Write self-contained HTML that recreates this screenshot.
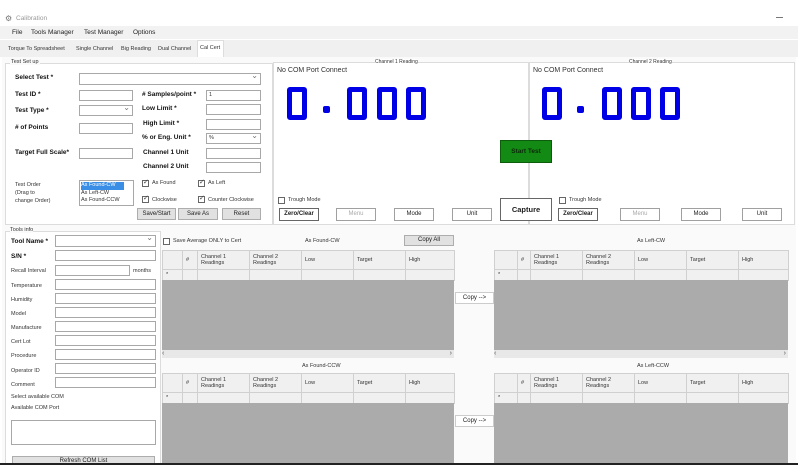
<!DOCTYPE html>
<html><head><meta charset="utf-8"><style>
*{box-sizing:border-box;margin:0;padding:0}
body{width:798px;height:472px;overflow:hidden;background:#fff;font-family:"Liberation Sans",sans-serif;font-size:6px;color:#333;position:relative}
.a{position:absolute;white-space:nowrap}
.b{font-weight:bold;font-size:6.5px;color:#111}
.in{position:absolute;background:#fff;border:1px solid #a8a8a8}
.dd:after{content:"⌄";position:absolute;right:2px;top:-3px;font-size:8px;color:#777}
.btn{position:absolute;border:1px solid #adadad;background:#e1e1e1;text-align:center;font-size:6px;color:#222}
.wb{background:#fff;border:1px solid #a0a0a0}
.cb{position:absolute;width:7px;height:7px;border:1px solid #666;background:#fff}
.ck:after{content:"✓";position:absolute;left:0;top:-3px;font-size:7px;color:#444}
.grp{position:absolute;border:1px solid #dcdcdc}
.dg{width:10px;height:33px;border:5px solid #0000e6;border-radius:3px;position:absolute}
.dot{position:absolute;width:7px;height:7px;background:#0000e6;border-radius:2px}
table{position:absolute;border-collapse:collapse;table-layout:fixed}
td{border:1px solid #d0d0d0;background:#f0f0f0;font-size:5.5px;color:#333;padding-left:3px;line-height:6px;vertical-align:middle}
.gray{position:absolute;background:#ababab}
.sb{position:absolute;background:#e8e8e8;height:8px;font-size:7px;color:#555}
</style></head><body>
<div class="a" style="left:5px;top:14px;font-size:8px;color:#777">&#x2699;</div>
<div class="a" style="left:16px;top:15px;font-size:6.5px;color:#999">Calibration</div>
<div class="a" style="left:776px;top:17px;width:7px;height:1px;background:#777"></div>
<div class="a" style="left:0;top:26px;width:798px;height:13px;background:#f2f2f2"></div>
<div class="a" style="left:12px;top:29px;font-size:6.5px;color:#222">File</div>
<div class="a" style="left:31px;top:29px;font-size:6.5px;color:#222">Tools Manager</div>
<div class="a" style="left:84px;top:29px;font-size:6.5px;color:#222">Test Manager</div>
<div class="a" style="left:133px;top:29px;font-size:6.5px;color:#222">Options</div>
<div class="a" style="left:0;top:40px;width:798px;height:17px;background:#f0f0f0"></div>
<div class="a" style="left:8px;top:46px;font-size:5.5px">Torque To Spreadsheet</div>
<div class="a" style="left:76px;top:46px;font-size:5.5px">Single Channel</div>
<div class="a" style="left:121px;top:46px;font-size:5.5px">Big Reading</div>
<div class="a" style="left:158px;top:46px;font-size:5.5px">Dual Channel</div>
<div class="a" style="left:197px;top:40px;width:27px;height:17px;background:#fff;border:1px solid #ddd;border-bottom:none"></div>
<div class="a" style="left:200px;top:45px;font-size:5.5px">Cal Cert</div>
<div class="a" style="left:2px;top:57px;width:794px;height:408px;background:#fafafa"></div>

<div class="grp" style="left:5px;top:63px;width:268px;height:162px;background:#fff"></div>
<div class="a" style="left:10px;top:59px;font-size:5.5px;background:#fafafa;padding:0 1px">Test Set up</div>
<div class="a b" style="left:15px;top:74px">Select Test *</div>
<div class="in dd" style="left:79px;top:73px;width:182px;height:12px"></div>
<div class="a b" style="left:15px;top:91px">Test ID *</div>
<div class="in" style="left:79px;top:90px;width:54px;height:11px"></div>
<div class="a b" style="left:142px;top:91px"># Samples/point *</div>
<div class="in" style="left:206px;top:90px;width:55px;height:11px"><span style="position:absolute;left:2px;top:1px;font-size:5.5px">1</span></div>
<div class="a b" style="left:15px;top:107px">Test Type *</div>
<div class="in dd" style="left:79px;top:105px;width:54px;height:11px"></div>
<div class="a b" style="left:142px;top:105px">Low Limit *</div>
<div class="in" style="left:206px;top:104px;width:55px;height:11px"></div>
<div class="a b" style="left:15px;top:124px"># of Points</div>
<div class="in" style="left:79px;top:123px;width:54px;height:11px"></div>
<div class="a b" style="left:143px;top:120px">High Limit *</div>
<div class="in" style="left:206px;top:119px;width:55px;height:11px"></div>
<div class="a b" style="left:142px;top:134px">% or Eng. Unit *</div>
<div class="in dd" style="left:206px;top:133px;width:55px;height:11px"><span style="position:absolute;left:2px;top:1px;font-size:5.5px">%</span></div>
<div class="a b" style="left:15px;top:149px">Target Full Scale*</div>
<div class="in" style="left:79px;top:148px;width:54px;height:11px"></div>
<div class="a b" style="left:143px;top:149px">Channel 1 Unit</div>
<div class="in" style="left:206px;top:148px;width:55px;height:11px"></div>
<div class="a b" style="left:143px;top:163px">Channel 2 Unit</div>
<div class="in" style="left:206px;top:162px;width:55px;height:11px"></div>
<div class="a" style="left:15px;top:181px;line-height:8px;font-size:5.5px">Test Order<br>(Drag to<br>change Order)</div>
<div class="in" style="left:79px;top:180px;width:55px;height:26px;font-size:5.5px;line-height:7.5px;padding-left:1px">
<div style="background:#3a8ee6;color:#fff;width:43px;margin-top:1px">As Found-CW</div>As Left-CW<br>As Found-CCW</div>
<div class="cb ck" style="left:142px;top:180px"></div><div class="a" style="left:152px;top:180px;font-size:5.5px">As Found</div>
<div class="cb ck" style="left:198px;top:180px"></div><div class="a" style="left:208px;top:180px;font-size:5.5px">As Left</div>
<div class="cb ck" style="left:142px;top:196px"></div><div class="a" style="left:152px;top:197px;font-size:5.5px">Clockwise</div>
<div class="cb ck" style="left:198px;top:196px"></div><div class="a" style="left:208px;top:197px;font-size:5.5px">Counter Clockwise</div>
<div class="btn" style="left:137px;top:208px;width:39px;height:12px;line-height:10px">Save/Start</div>
<div class="btn" style="left:178px;top:208px;width:40px;height:12px;line-height:10px">Save As</div>
<div class="btn" style="left:222px;top:208px;width:39px;height:12px;line-height:10px">Reset</div>

<div class="grp" style="left:273px;top:62px;width:256px;height:163px;background:#fff"></div>
<div class="grp" style="left:529px;top:62px;width:266px;height:163px;background:#fff"></div>
<div class="a" style="left:375px;top:59px;font-size:5px;background:#fff">Channel 1 Reading</div>
<div class="a" style="left:629px;top:59px;font-size:5px;background:#fff">Channel 2 Reading</div>
<div class="a" style="left:277px;top:67px;font-size:7px;color:#333">No COM Port Connect</div>
<div class="a" style="left:533px;top:67px;font-size:7px;color:#333">No COM Port Connect</div>
<div class="dg" style="left:287px;top:87px;width:20px"></div>
<div class="dot" style="left:323px;top:106px"></div>
<div class="dg" style="left:347px;top:87px;width:20px"></div>
<div class="dg" style="left:377px;top:87px;width:20px"></div>
<div class="dg" style="left:406px;top:87px;width:20px"></div>
<div class="dg" style="left:542px;top:87px;width:20px"></div>
<div class="dot" style="left:577px;top:106px"></div>
<div class="dg" style="left:602px;top:87px;width:20px"></div>
<div class="dg" style="left:631px;top:87px;width:20px"></div>
<div class="dg" style="left:660px;top:87px;width:20px"></div>
<div class="a" style="left:500px;top:140px;width:52px;height:23px;background:#138a13;border:1px solid #0c5c0c;text-align:center;line-height:21px;font-size:6.5px;font-weight:bold;color:#062"><span style="color:#0a2a0a">Start Test</span></div>
<div class="cb" style="left:278px;top:197px"></div><div class="a" style="left:288px;top:197px;font-size:5.5px">Trough Mode</div>
<div class="cb" style="left:559px;top:197px"></div><div class="a" style="left:569px;top:197px;font-size:5.5px">Trough Mode</div>
<div class="btn wb" style="left:279px;top:208px;width:40px;height:13px;line-height:11px;font-weight:bold;border-color:#666">Zero/Clear</div>
<div class="btn wb" style="left:336px;top:208px;width:40px;height:13px;line-height:11px;color:#aaa">Menu</div>
<div class="btn wb" style="left:394px;top:208px;width:40px;height:13px;line-height:11px">Mode</div>
<div class="btn wb" style="left:452px;top:208px;width:40px;height:13px;line-height:11px">Unit</div>
<div class="btn wb" style="left:500px;top:198px;width:52px;height:23px;line-height:21px;font-weight:bold;font-size:7.5px;border:1px solid #666">Capture</div>
<div class="btn wb" style="left:558px;top:208px;width:40px;height:13px;line-height:11px;font-weight:bold;border-color:#666">Zero/Clear</div>
<div class="btn wb" style="left:620px;top:208px;width:40px;height:13px;line-height:11px;color:#aaa">Menu</div>
<div class="btn wb" style="left:681px;top:208px;width:40px;height:13px;line-height:11px">Mode</div>
<div class="btn wb" style="left:742px;top:208px;width:40px;height:13px;line-height:11px">Unit</div>

<div class="grp" style="left:5px;top:231px;width:156px;height:234px;background:#fff"></div>
<div class="a" style="left:10px;top:227px;font-size:5.5px;background:#fafafa">Tools info</div>
<div class="a b" style="left:11px;top:238px">Tool Name *</div>
<div class="in dd" style="left:55px;top:235px;width:101px;height:12px"></div>
<div class="a b" style="left:11px;top:253px">S/N *</div>
<div class="in" style="left:55px;top:250px;width:101px;height:11px"></div>
<div class="a" style="left:11px;top:268px;font-size:5.5px">Recall Interval</div>
<div class="in" style="left:55px;top:265px;width:75px;height:11px"></div>
<div class="a" style="left:133px;top:268px;font-size:5.5px">months</div>
<div class="a" style="left:11px;top:283px;font-size:5.5px">Temperature</div><div class="in" style="left:55px;top:279px;width:101px;height:11px"></div>
<div class="a" style="left:11px;top:297px;font-size:5.5px">Humidity</div><div class="in" style="left:55px;top:293px;width:101px;height:11px"></div>
<div class="a" style="left:11px;top:311px;font-size:5.5px">Model</div><div class="in" style="left:55px;top:307px;width:101px;height:11px"></div>
<div class="a" style="left:11px;top:325px;font-size:5.5px">Manufacture</div><div class="in" style="left:55px;top:321px;width:101px;height:11px"></div>
<div class="a" style="left:11px;top:339px;font-size:5.5px">Cert Lot</div><div class="in" style="left:55px;top:335px;width:101px;height:11px"></div>
<div class="a" style="left:11px;top:353px;font-size:5.5px">Procedure</div><div class="in" style="left:55px;top:349px;width:101px;height:11px"></div>
<div class="a" style="left:11px;top:368px;font-size:5.5px">Operator ID</div><div class="in" style="left:55px;top:363px;width:101px;height:11px"></div>
<div class="a" style="left:11px;top:382px;font-size:5.5px">Comment</div><div class="in" style="left:55px;top:377px;width:101px;height:11px"></div>
<div class="a" style="left:11px;top:394px;font-size:5.5px">Select available COM</div>
<div class="a" style="left:11px;top:405px;font-size:5.5px">Available COM Port</div>
<div class="in" style="left:11px;top:420px;width:145px;height:25px"></div>
<div class="btn" style="left:12px;top:456px;width:143px;height:9px;font-size:6px;line-height:9px">Refresh COM List</div>

<div class="cb" style="left:163px;top:238px"></div><div class="a" style="left:173px;top:238px;font-size:5.5px">Save Average ONLY to Cert</div>
<div class="a" style="left:305px;top:238px;font-size:5.5px">As Found-CW</div>
<div class="btn" style="left:404px;top:235px;width:50px;height:11px;line-height:9px">Copy All</div>
<div class="a" style="left:637px;top:238px;font-size:5.5px">As Left-CW</div>
<div class="a" style="left:302px;top:363px;font-size:5.5px">As Found-CCW</div>
<div class="a" style="left:637px;top:363px;font-size:5.5px">As Left-CCW</div>
<div class="btn wb" style="left:455px;top:292px;width:39px;height:12px;line-height:10px;border-color:#ccc">Copy --&gt;</div>
<div class="btn wb" style="left:455px;top:415px;width:39px;height:12px;line-height:10px;border-color:#ccc">Copy --&gt;</div>

<table style="left:162px;top:250px;width:292px"><colgroup><col style="width:20px"><col style="width:15px"><col style="width:52px"><col style="width:52px"><col style="width:52px"><col style="width:52px"><col style="width:49px"></colgroup>
<tr style="height:19px"><td></td><td>#</td><td>Channel 1<br>Readings</td><td>Channel 2<br>Readings</td><td>Low</td><td>Target</td><td>High</td></tr>
<tr style="height:11px"><td>*</td><td></td><td></td><td></td><td></td><td></td><td></td></tr></table>
<div class="gray" style="left:162px;top:280px;width:292px;height:70px"></div>
<div class="sb" style="left:162px;top:350px;width:292px">&lsaquo;<span style="position:absolute;right:2px">&rsaquo;</span></div>
<table style="left:162px;top:373px;width:292px"><colgroup><col style="width:20px"><col style="width:15px"><col style="width:52px"><col style="width:52px"><col style="width:52px"><col style="width:52px"><col style="width:49px"></colgroup>
<tr style="height:19px"><td></td><td>#</td><td>Channel 1<br>Readings</td><td>Channel 2<br>Readings</td><td>Low</td><td>Target</td><td>High</td></tr>
<tr style="height:11px"><td>*</td><td></td><td></td><td></td><td></td><td></td><td></td></tr></table>
<div class="gray" style="left:162px;top:403px;width:292px;height:61px"></div>

<table style="left:494px;top:250px;width:294px"><colgroup><col style="width:23px"><col style="width:13px"><col style="width:52px"><col style="width:52px"><col style="width:52px"><col style="width:52px"><col style="width:50px"></colgroup>
<tr style="height:19px"><td></td><td>#</td><td>Channel 1<br>Readings</td><td>Channel 2<br>Readings</td><td>Low</td><td>Target</td><td>High</td></tr>
<tr style="height:11px"><td>*</td><td></td><td></td><td></td><td></td><td></td><td></td></tr></table>
<div class="gray" style="left:494px;top:280px;width:294px;height:70px"></div>
<div class="sb" style="left:494px;top:350px;width:294px">&lsaquo;<span style="position:absolute;right:2px">&rsaquo;</span></div>
<table style="left:494px;top:373px;width:294px"><colgroup><col style="width:23px"><col style="width:13px"><col style="width:52px"><col style="width:52px"><col style="width:52px"><col style="width:52px"><col style="width:50px"></colgroup>
<tr style="height:19px"><td></td><td>#</td><td>Channel 1<br>Readings</td><td>Channel 2<br>Readings</td><td>Low</td><td>Target</td><td>High</td></tr>
<tr style="height:11px"><td>*</td><td></td><td></td><td></td><td></td><td></td><td></td></tr></table>
<div class="gray" style="left:494px;top:403px;width:294px;height:61px"></div>

<div class="a" style="left:0;top:463px;width:798px;height:2px;background:#222"></div>
<div class="a" style="left:0;top:465px;width:798px;height:7px;background:#fff"></div>
</body></html>
